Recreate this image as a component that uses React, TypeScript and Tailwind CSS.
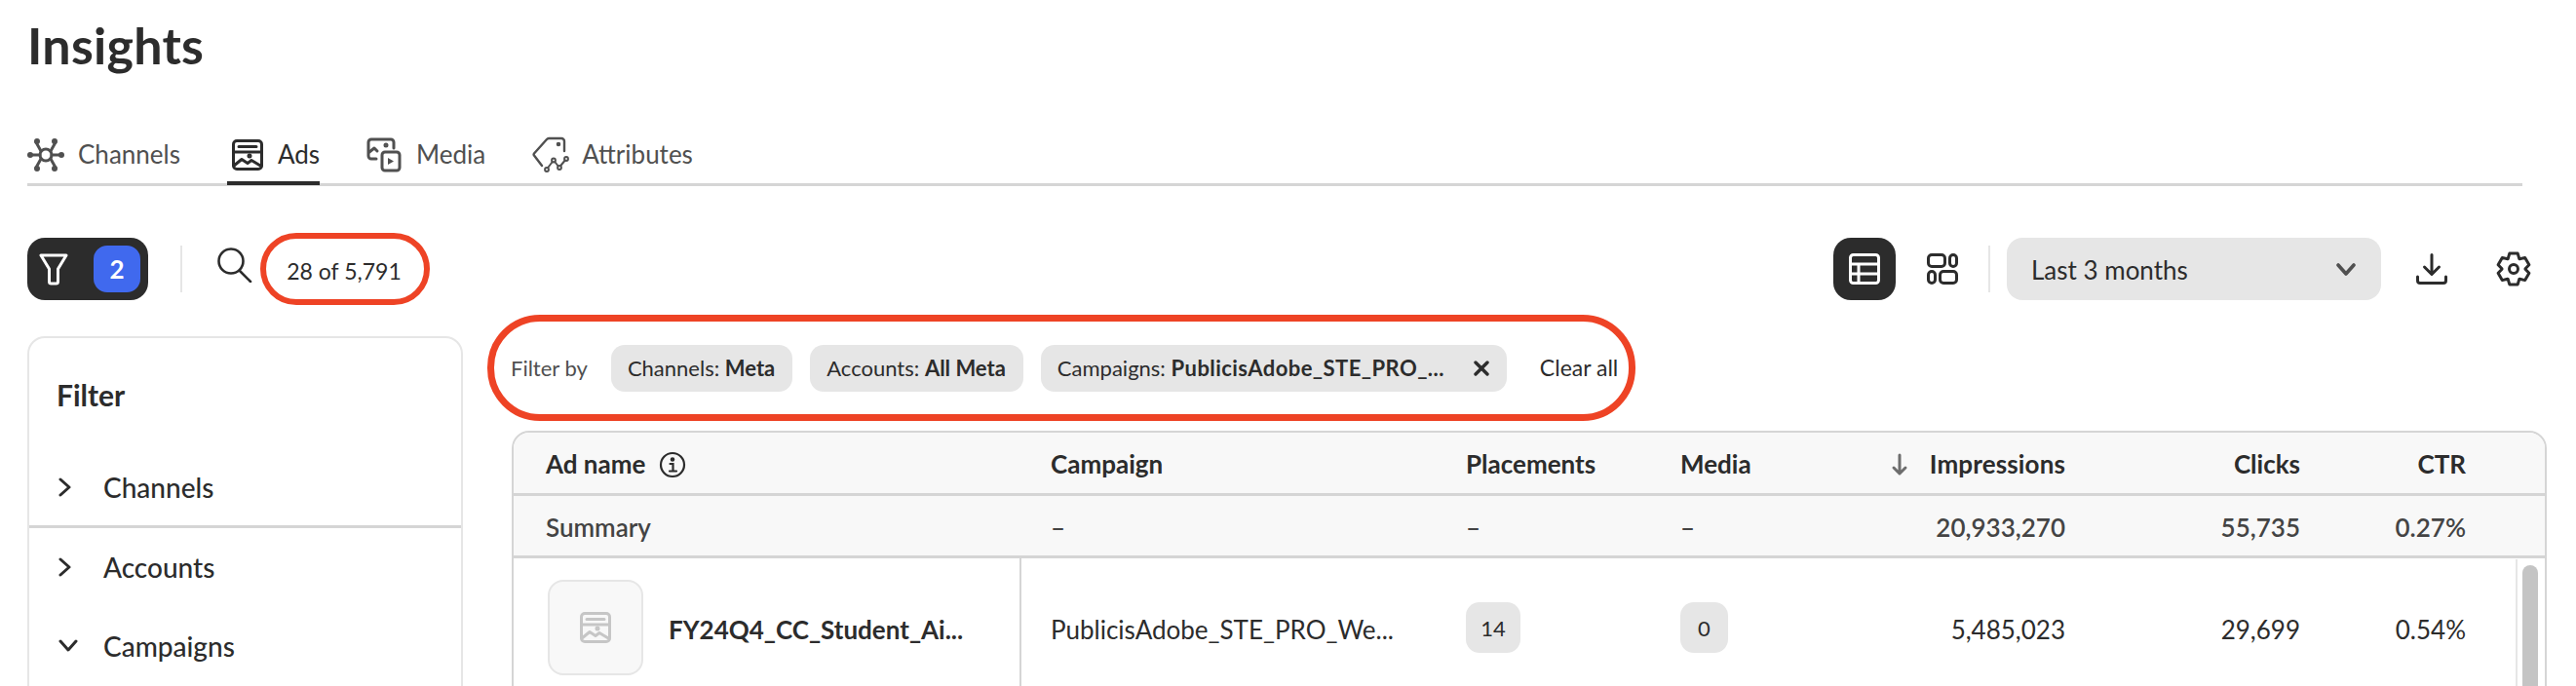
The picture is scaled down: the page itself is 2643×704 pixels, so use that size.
const INK = "#2c2c2c";

function gearPath() {
  // six lobes round the centre
  const pts: string[] = [];
  for (let i = 0; i < 6; i++) {
    const a = (Math.PI / 3) * i - Math.PI / 2;
    const p = (r: number, d: number) =>
      `${(18 + r * Math.cos(a + d)).toFixed(1)} ${(18 + r * Math.sin(a + d)).toFixed(1)}`;
    pts.push(`${p(12, -0.5)} L${p(16.5, -0.26)} L${p(16.5, 0.26)} L${p(12, 0.5)}`);
  }
  return "M" + pts.join(" L") + " Z";
}

function ChannelsIcon() {
  return (
    <svg width="38" height="36" viewBox="0 0 38 36" fill="none" stroke="#505050" strokeWidth="3" strokeLinecap="round">
      <circle cx="19" cy="18" r="6" />
      <path d="M14 14 9 5M24 14l5-9M14 22l-5 9M24 22l5 9M13 18H4M25 18h9" />
      <g fill="#505050" stroke="none">
        <circle cx="10" cy="4" r="3" />
        <circle cx="28" cy="4" r="3" />
        <circle cx="10" cy="32" r="3" />
        <circle cx="28" cy="32" r="3" />
        <circle cx="3" cy="18" r="3" />
        <circle cx="35" cy="18" r="3" />
      </g>
    </svg>
  );
}

function AdIcon({ size, color, width }: { size: number; color: string; width: number }) {
  return (
    <svg width={size} height={size} viewBox="0 0 32 32" fill="none" stroke={color} strokeWidth={width} strokeLinejoin="round" strokeLinecap="round">
      <rect x="1.5" y="1.5" width="29" height="29" rx="3.5" />
      <path d="M7 7.5h18M1.5 13h29M2 27l8-6.5 6 4 4-3 10 6" />
      <circle cx="18" cy="17" r="1" fill={color} />
    </svg>
  );
}

function MediaIcon() {
  return (
    <svg width="36" height="36" viewBox="0 0 36 36" fill="none" stroke="#505050" strokeWidth="3" strokeLinecap="round" strokeLinejoin="round">
      <path d="M10 22H5a3 3 0 0 1-3-3V5a3 3 0 0 1 3-3h20a3 3 0 0 1 3 3v6" />
      <path d="M3 15l5-4 3 3" />
      <circle cx="20" cy="8" r="1" fill="#505050" />
      <rect x="16" y="15" width="18" height="19" rx="3" />
      <path d="M22 21l6 3.5-6 3.5z" fill="#505050" stroke="none" />
    </svg>
  );
}

function AttributesIcon() {
  return (
    <svg width="38" height="37" viewBox="0 0 38 37" fill="none" stroke="#505050" strokeWidth="2.4" strokeLinecap="round" strokeLinejoin="round">
      <path d="M10 30 2 19.5a1.6 1.6 0 0 1 0-2L15 3a3 3 0 0 1 2-1h13a3 3 0 0 1 3 3v10" />
      <circle cx="27" cy="8" r="1.1" fill="#505050" />
      <path d="M16.2 32l4.6-6M23.2 26l3.6 4.5M29.2 30l4.6-5.5" strokeWidth="2" />
      <circle cx="15" cy="34" r="1.9" strokeWidth="2" />
      <circle cx="22" cy="24.5" r="1.9" strokeWidth="2" />
      <circle cx="28" cy="32" r="1.9" strokeWidth="2" />
      <circle cx="35" cy="23" r="1.9" strokeWidth="2" />
    </svg>
  );
}

function Tab({ icon, label, active }: { icon: React.ReactNode; label: string; active?: boolean }) {
  return (
    <div
      className={`flex h-[62px] items-center border-b-4 pt-[3px] text-[26px] ${
        active ? "border-[#2c2c2c] text-[#2c2c2c]" : "border-transparent text-[#505050]"
      }`}
    >
      {icon}
      <span>{label}</span>
    </div>
  );
}

function Chip({ label, value, close }: { label: string; value: string; close?: boolean }) {
  return (
    <div className="flex h-[48px] shrink-0 items-center whitespace-nowrap rounded-[14px] bg-[#e6e6e6] pl-[17px] pr-[18px] text-[22px] text-[#2c2c2c]">
      <span>
        {label} <span className={close ? "font-bold tracking-[0.02em]" : "font-bold"}>{value}</span>
      </span>
      {close && (
        <svg className="ml-[30px]" width="16" height="16" viewBox="0 0 16 16" stroke={INK} strokeWidth="3.4" strokeLinecap="round">
          <path d="M2 2l12 12M14 2 2 14" />
        </svg>
      )}
    </div>
  );
}

function FilterRow({ label, open, className }: { label: string; open?: boolean; className: string }) {
  return (
    <div className={`flex items-center pl-[30px] text-[28px] font-medium text-[#2c2c2c] ${className}`}>
      <span className="flex w-[46px]">
        {open ? (
          <svg width="20" height="14" viewBox="0 0 20 14" fill="none" stroke={INK} strokeWidth="3" strokeLinecap="round" strokeLinejoin="round">
            <path d="M2 2l8 9 8-9" />
          </svg>
        ) : (
          <svg width="14" height="20" viewBox="0 0 14 20" fill="none" stroke={INK} strokeWidth="3" strokeLinecap="round" strokeLinejoin="round">
            <path d="M2 2l9 8-9 8" />
          </svg>
        )}
      </span>
      {label}
    </div>
  );
}

const COLS = "grid grid-cols-[521px_426px_220px_220px_235px_241px_170px_1fr] items-center";

export default function App() {
  return (
    <div className="h-[704px] w-[2643px] overflow-hidden bg-white pl-[28px] font-['Lato',sans-serif] text-[#2c2c2c]">
      <h1 className="h-[128px] pt-[16px] text-[52px] font-bold leading-[60px] tracking-[0.005em]">Insights</h1>

      <div className="flex h-[63px] w-[2560px] gap-[48px] border-b-[3px] border-[#d5d5d5]">
        <Tab icon={<span className="mr-[14px]"><ChannelsIcon /></span>} label="Channels" />
        <Tab active icon={<span className="ml-[5px] mr-[15px]"><AdIcon size={32} color={INK} width={3} /></span>} label="Ads" />
        <Tab icon={<span className="mr-[15px]"><MediaIcon /></span>} label="Media" />
        <Tab icon={<span className="mr-[13px]"><AttributesIcon /></span>} label="Attributes" />
      </div>

      <div className="mt-[53px] flex h-[64px] items-center">
        <div className="flex h-[64px] w-[124px] items-center justify-between rounded-[18px] bg-[#2c2c2c] pl-[12px] pr-[8px]">
          <svg width="30" height="33" viewBox="0 0 30 33" fill="none" stroke="#fff" strokeWidth="3" strokeLinejoin="round">
            <path d="M2 2h26L19.5 16v13a2 2 0 0 1-2 2h-5a2 2 0 0 1-2-2V16z" />
          </svg>
          <span className="flex h-[48px] w-[48px] items-center justify-center rounded-[14px] bg-[#4069ee] text-[26px] font-bold text-white">2</span>
        </div>
        <div className="ml-[33px] h-[48px] w-[2px] bg-[#e6e6e6]" />
        <svg className="ml-[36px] -mt-[8px]" width="36" height="36" viewBox="0 0 36 36" fill="none" stroke={INK} strokeWidth="2.6" strokeLinecap="round">
          <circle cx="14" cy="14" r="12.5" />
          <path d="M23 24l11 11" />
        </svg>
        <div className="-my-[5px] ml-[8px] flex h-[74px] w-[174px] items-center justify-center rounded-full border-[6px] border-[#ee4325] pr-[2px] pt-[5px] text-[23px] text-[#2c2c2c]">
          28 of 5,791
        </div>

        <div className="ml-[1440px] flex h-[64px] w-[64px] items-center justify-center rounded-[18px] bg-[#2c2c2c]">
          <svg width="32" height="32" viewBox="0 0 32 32" fill="none" stroke="#fff" strokeWidth="3" strokeLinejoin="round">
            <rect x="1.5" y="1.5" width="29" height="29" rx="3" />
            <path d="M1.5 11h29M1.5 21h29M10 11v19.5" />
          </svg>
        </div>
        <svg className="ml-[32px]" width="32" height="32" viewBox="0 0 32 32" fill="none" stroke={INK} strokeWidth="3">
          <rect x="1.5" y="1.5" width="17" height="12" rx="3.5" />
          <rect x="23.5" y="1.5" width="7" height="12" rx="3.5" />
          <rect x="1.5" y="18.5" width="7" height="12" rx="3.5" />
          <rect x="13.5" y="18.5" width="17" height="12" rx="3.5" />
        </svg>
        <div className="ml-[31px] h-[48px] w-[2px] bg-[#e6e6e6]" />
        <div className="ml-[17px] flex h-[64px] w-[384px] items-center justify-between rounded-[16px] bg-[#e6e6e6] pl-[25px] pr-[26px] pt-[2px] text-[26px] text-[#2c2c2c]">
          Last 3 months
          <svg width="20" height="14" viewBox="0 0 20 14" fill="none" stroke="#505050" strokeWidth="3.6" strokeLinecap="round" strokeLinejoin="round">
            <path d="M2 2l8 9 8-9" />
          </svg>
        </div>
        <svg className="ml-[36px]" width="32" height="32" viewBox="0 0 32 32" fill="none" stroke={INK} strokeWidth="3" strokeLinecap="round" strokeLinejoin="round">
          <path d="M16 1.5V21M8.5 14l7.5 7.5 7.5-7.5M1.5 24v4a2.5 2.5 0 0 0 2.5 2.5h24a2.5 2.5 0 0 0 2.5-2.5v-4" />
        </svg>
        <svg className="ml-[50px]" width="36" height="36" viewBox="0 0 36 36" fill="none" stroke={INK} strokeWidth="3" strokeLinejoin="round">
          <path d={gearPath()} />
          <circle cx="18" cy="18" r="4.5" />
        </svg>
      </div>

      <div className="mt-[15px] flex">
        <aside className="mt-[22px] h-[500px] w-[447px] shrink-0 rounded-[18px] border-2 border-[#e6e6e6]">
          <div className="flex h-[111px] items-center pl-[28px] pt-[5px] text-[30px] font-bold text-[#2c2c2c]">Filter</div>
          <FilterRow label="Channels" className="h-[84px] border-b-[3px] border-[#d5d5d5] pt-[2px]" />
          <FilterRow label="Accounts" className="h-[78px] pt-[2px]" />
          <FilterRow label="Campaigns" open className="h-[81px] pt-[5px]" />
        </aside>

        <main className="ml-[25px]">
          <div className="flex h-[109px] w-[1178px] items-center whitespace-nowrap rounded-[54px] border-[7px] border-[#ee4325] pl-[17px] text-[#2c2c2c]">
            <span className="mr-[24px] text-[22px] text-[#505050]">Filter by</span>
            <div className="flex gap-[18px]">
              <Chip label="Channels:" value="Meta" />
              <Chip label="Accounts:" value="All Meta" />
              <Chip label="Campaigns:" value="PublicisAdobe_STE_PRO_..." close />
            </div>
            <span className="ml-[34px] text-[23px]">Clear all</span>
          </div>

          <div className="relative ml-[25px] mt-[10px] h-[400px] w-[2088px] overflow-hidden rounded-t-[18px] border-2 border-[#d5d5d5]">
            <div className={`${COLS} h-[65px] border-b-[3px] border-[#d5d5d5] bg-[#f8f8f8] pt-[3px] text-[26px] font-bold text-[#2c2c2c]`}>
              <div className="flex items-center pl-[33px]">
                Ad name
                <svg className="ml-[14px]" width="28" height="28" viewBox="0 0 28 28" fill="none" stroke={INK} strokeWidth="2.2" strokeLinecap="round">
                  <circle cx="14" cy="14" r="12" />
                  <path d="M11.5 13H14.5V20M11 20.5h7" />
                  <circle cx="14" cy="8.5" r="1.2" fill={INK} />
                </svg>
              </div>
              <div className="pl-[30px]">Campaign</div>
              <div className="pl-[30px]">Placements</div>
              <div className="pl-[30px]">Media</div>
              <div className="flex items-center justify-end pr-[30px]">
                <svg className="mr-[22px]" width="18" height="24" viewBox="0 0 18 24" fill="none" stroke="#6d6d6d" strokeWidth="3" strokeLinecap="round" strokeLinejoin="round">
                  <path d="M9 2v19M3 15l6 6 6-6" />
                </svg>
                <span className="tracking-[0.005em]">Impressions</span>
              </div>
              <div className="pr-[30px] text-right">Clicks</div>
              <div className="pr-[30px] text-right">CTR</div>
            </div>

            <div className={`${COLS} h-[64px] border-b-[3px] border-[#d5d5d5] bg-[#f8f8f8] pt-[3px] text-[26px] font-semibold text-[#444]`}>
              <div className="pl-[33px]">Summary</div>
              <div className="pl-[30px]">–</div>
              <div className="pl-[30px]">–</div>
              <div className="pl-[30px]">–</div>
              <div className="pr-[30px] text-right">20,933,270</div>
              <div className="pr-[30px] text-right">55,735</div>
              <div className="pr-[30px] text-right">0.27%</div>
            </div>

            <div className={`${COLS} h-[142px] text-[26px] text-[#2c2c2c]`}>
              <div className="flex h-full items-center border-r-2 border-[#d5d5d5] pl-[35px]">
                <div className="flex h-[98px] w-[98px] items-center justify-center rounded-[16px] border-2 border-[#e6e6e6] bg-[#f8f8f8]">
                  <AdIcon size={32} color="#c6c6c6" width={3} />
                </div>
                <span className="ml-[26px] pt-[4px] font-bold">FY24Q4_CC_Student_Ai...</span>
              </div>
              <div className="pl-[30px] pt-[4px]">PublicisAdobe_STE_PRO_We...</div>
              <div className="pl-[30px]">
                <span className="flex h-[52px] w-[56px] items-center justify-center rounded-[14px] bg-[#e6e6e6] text-[22px]">14</span>
              </div>
              <div className="pl-[30px]">
                <span className="flex h-[52px] w-[49px] items-center justify-center rounded-[14px] bg-[#e6e6e6] text-[22px]">0</span>
              </div>
              <div className="pr-[30px] pt-[4px] text-right">5,485,023</div>
              <div className="pr-[30px] pt-[4px] text-right">29,699</div>
              <div className="pr-[30px] pt-[4px] text-right">0.54%</div>
            </div>

            <div className="absolute bottom-0 right-0 top-[130px] w-[30px] border-l-2 border-[#e6e6e6]">
              <div className="absolute left-[5px] top-[6px] h-[300px] w-[16px] rounded-full bg-[#c4c4c4]" />
            </div>
          </div>
        </main>
      </div>
    </div>
  );
}
